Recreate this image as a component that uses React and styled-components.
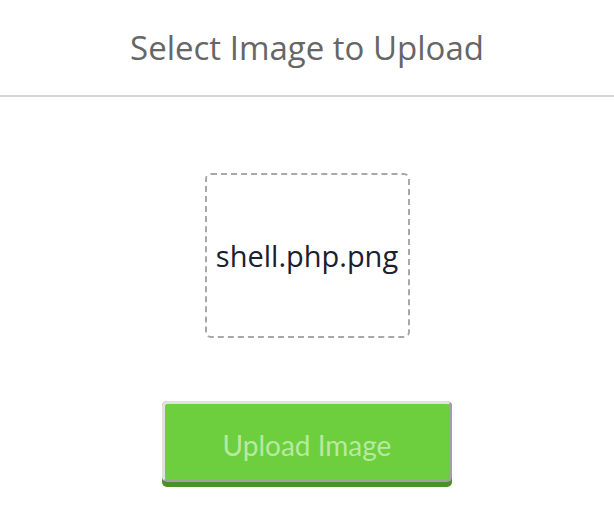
import React from "react";
import styled, { createGlobalStyle } from "styled-components";

const Global = createGlobalStyle`
  html, body { margin: 0; padding: 0; background: #fff; }
  body { font-family: "Open Sans", sans-serif; }
`;

const Page = styled.div`
  width: 614px;
  min-height: 527px;
  display: flex;
  flex-direction: column;
`;

const Header = styled.header`
  height: 95px;
  border-bottom: 2px solid #d6d6d6;
  display: flex;
  align-items: center;
  justify-content: center;
`;

const Title = styled.h1`
  margin: 0;
  font-family: "Open Sans", sans-serif;
  font-weight: 400;
  font-size: 33px;
  color: #666;
`;

const Body = styled.main`
  display: flex;
  flex-direction: column;
  align-items: center;
  padding-top: 76px;
`;

const DropBox = styled.div`
  box-sizing: border-box;
  width: 205px;
  height: 165px;
  border: 2px dashed #a8a8a8;
  border-radius: 6px;
  display: flex;
  align-items: center;
  justify-content: center;
`;

const FileName = styled.span`
  font-family: "Open Sans", sans-serif;
  font-size: 29px;
  color: #1b2030;
`;

const ButtonLedge = styled.div`
  margin-top: 63px;
  padding-bottom: 5px;
  background: #4d8f2a;
  border-radius: 5px;
`;

const UploadButton = styled.button`
  appearance: none;
  -webkit-appearance: none;
  display: block;
  box-sizing: border-box;
  width: 290px;
  height: 81px;
  margin: 0;
  padding: 6px 0 0;
  background: #6dcf3e;
  border-style: solid;
  border-width: 3px;
  border-color: #e1e1e1 #a0a0a0 #a0a0a0 #e1e1e1;
  border-radius: 5px;
  font-family: Lato, sans-serif;
  font-size: 28px;
  color: #b6eaa0;
  cursor: pointer;
`;

export default function App() {
  return (
    <Page>
      <Global />
      <Header>
        <Title>Select Image to Upload</Title>
      </Header>
      <Body>
        <DropBox>
          <FileName>shell.php.png</FileName>
        </DropBox>
        <ButtonLedge>
          <UploadButton>Upload Image</UploadButton>
        </ButtonLedge>
      </Body>
    </Page>
  );
}
